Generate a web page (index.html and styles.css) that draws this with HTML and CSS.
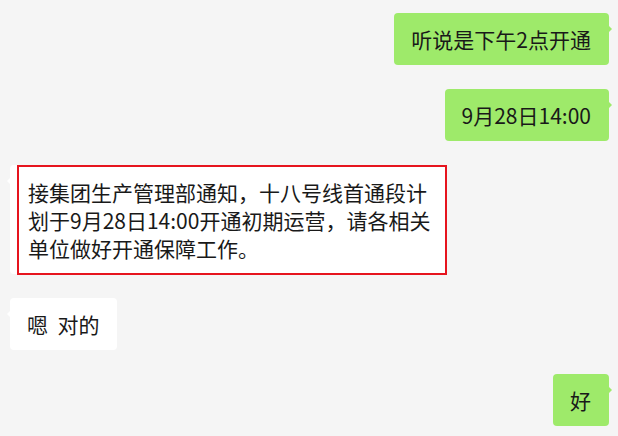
FILE: index.html
```html
<!DOCTYPE html>
<html lang="zh-CN">
<head>
    <meta charset="UTF-8">
    <title>聊天记录</title>
    <link rel="stylesheet" href="styles.css">
</head>
<body>
    <main class="chat">
        <div class="msg me"><div class="bubble">听说是下午2点开通</div></div>
        <div class="msg me"><div class="bubble">9月28日14:00</div></div>
        <div class="msg other">
            <div class="bubble notice">接集团生产管理部通知，十八号线首通段计划于9月28日14:00开通初期运营，请各相关单位做好开通保障工作。<span class="mark"></span></div>
        </div>
        <div class="msg other"><div class="bubble">嗯&nbsp;&nbsp;对的</div></div>
        <div class="msg me"><div class="bubble">好</div></div>
    </main>
</body>
</html>
```

FILE: styles.css
```css
* { margin: 0; padding: 0; box-sizing: border-box; }
body { background: #f5f5f5; font-family: "Noto Sans CJK SC", "Microsoft YaHei", sans-serif; color: #191919; }
.chat { display: flex; flex-direction: column; gap: 24px; padding: 13px 9px 10px 10px; }
.msg { display: flex; }
.msg.me { justify-content: flex-end; }
.bubble { position: relative; font-size: 21px; line-height: 28px; padding: 12px 18px 12px 17px; border-radius: 4px; background: #fff; }
.me .bubble { background: #9eea6a; }
.bubble::after { content: ""; position: absolute; top: 12px; border: 4px solid transparent; }
.me .bubble::after { right: -7px; border-left: 4px solid #9eea6a; }
.other .bubble::after { left: -7px; border-right: 4px solid #fff; }
.notice { width: 436px; padding: 13px 12px 12px 18px; }
.mark { position: absolute; left: 7px; top: 0; right: -1px; bottom: -1px; border: 2px solid #e6141e; }
```
